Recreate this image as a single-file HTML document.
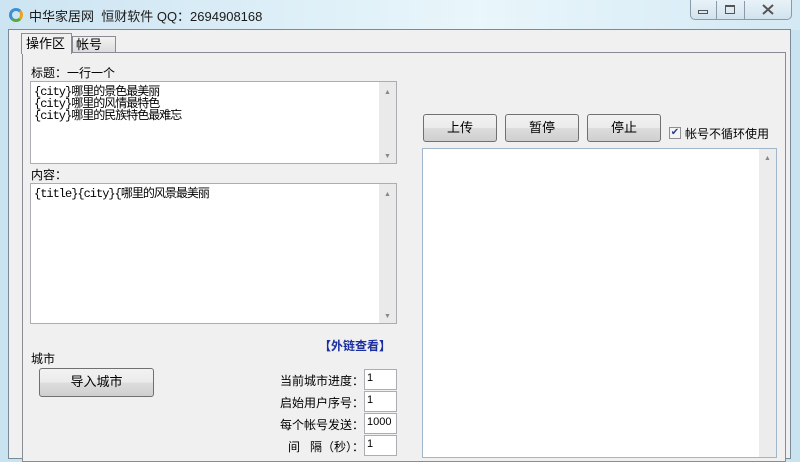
<!DOCTYPE html>
<html><head><meta charset="utf-8"><style>
*{margin:0;padding:0;box-sizing:border-box}
body{width:800px;height:454px;overflow:hidden;position:relative;background:#c9e3f0;font-family:"Liberation Sans","Noto Sans CJK SC","WenQuanYi Zen Hei",sans-serif;font-size:12px;color:#000}
.a{position:absolute}
.title{left:0;top:0;width:800px;height:30px;background:linear-gradient(90deg,#cde4f2 0%,#dff0f8 40%,#e9f6fb 60%,#d4e9f4 100%);}
.client{left:8px;top:29px;width:783px;height:430px;background:#f0f0f0;border:1px solid #7a8a99}
.ta{background:#fff;border:1px solid #abadb3}
.sb{position:absolute;right:0;top:0;width:17px;bottom:0;background:#eaeaea}
.btn{border:1px solid #707070;border-radius:3px;background:linear-gradient(#f2f2f2,#ebebeb 50%,#dddddd 51%,#cfcfcf);text-align:center;font-size:13px}
.mono{font-family:"Liberation Mono","Noto Sans CJK SC",monospace;font-size:12px;line-height:12px;letter-spacing:-1px}
.inp{background:#fff;border:1px solid #abadb3;width:33px;height:21px;font-size:11px;padding:2px 2px;line-height:12px}
.lbl{font-size:12px;text-align:right;width:120px}
</style></head><body>
<div class="a title"></div>
<div class="a" style="left:9px;top:8px;width:14px;height:14px;border-radius:50%;border:3px solid #3d8fd6;border-right-color:#e8a420;border-bottom-color:#5aa83c"></div>
<div class="a" style="left:29px;top:6px;font-size:13px;color:#1a1a1a">中华家居网&nbsp; 恒财软件 QQ：2694908168</div>
<div class="a" style="left:690px;top:0;width:102px;height:20px;border:1px solid #8a9aab;border-top:none;border-radius:0 0 5px 5px;background:linear-gradient(#e8f2f8,#d2e3ee)"></div>
<div class="a" style="left:716px;top:1px;width:1px;height:18px;background:#8a9aab"></div>
<div class="a" style="left:744px;top:1px;width:1px;height:18px;background:#8a9aab"></div>
<div class="a" style="left:698px;top:10px;width:10px;height:4px;border:1px solid #555"></div>
<div class="a" style="left:725px;top:5px;width:10px;height:9px;border:1px solid #555;border-top-width:2px"></div>
<svg class="a" style="left:762px;top:4px" width="12" height="11"><path d="M1 1L11 10M11 1L1 10" stroke="#555" stroke-width="2"/></svg>
<div class="a client"></div>
<div class="a" style="left:22px;top:52px;width:764px;height:410px;border:1px solid #898c95;background:#f0f0f0"></div>
<div class="a" style="left:72px;top:36px;width:44px;height:17px;border:1px solid #898c95;background:linear-gradient(#f3f3f3,#dcdcdc);font-size:13px;padding-left:3px;line-height:16px">帐号</div>
<div class="a" style="left:21px;top:33px;width:51px;height:21px;border:1px solid #898c95;border-bottom:none;background:#f0f0f0;font-size:13px;padding-left:4px;line-height:19px">操作区</div>
<div class="a" style="left:31px;top:64px;font-size:12px">标题：一行一个</div>
<div class="a ta" style="left:30px;top:81px;width:367px;height:83px"><div class="sb"><div class="a" style="left:5px;top:7px;font-size:7px;color:#888">▲</div><div class="a" style="left:5px;bottom:3px;font-size:7px;color:#888">▼</div></div>
<div class="a mono" style="left:3px;top:4px">{city}哪里的景色最美丽<br>{city}哪里的风情最特色<br>{city}哪里的民族特色最难忘</div></div>
<div class="a" style="left:31px;top:166px;font-size:12px">内容：</div>
<div class="a ta" style="left:30px;top:183px;width:367px;height:141px"><div class="sb"><div class="a" style="left:5px;top:7px;font-size:7px;color:#888">▲</div><div class="a" style="left:5px;bottom:3px;font-size:7px;color:#888">▼</div></div>
<div class="a mono" style="left:3px;top:4px">{title}{city}{哪里的风景最美丽</div></div>
<div class="a" style="left:319px;top:337px;font-size:12px;font-weight:bold;color:#1a2ea0">【外链查看】</div>
<div class="a" style="left:31px;top:350px;font-size:12px">城市</div>
<div class="a btn" style="left:39px;top:368px;width:115px;height:29px;line-height:26px">导入城市</div>
<div class="a lbl" style="left:244px;top:372px">当前城市进度：</div>
<div class="a lbl" style="left:244px;top:394px">启始用户序号：</div>
<div class="a lbl" style="left:244px;top:416px">每个帐号发送：</div>
<div class="a lbl" style="left:244px;top:438px">间&nbsp;&nbsp; 隔（秒）：</div>
<div class="a inp" style="left:364px;top:369px">1</div>
<div class="a inp" style="left:364px;top:391px">1</div>
<div class="a inp" style="left:364px;top:413px">1000</div>
<div class="a inp" style="left:364px;top:435px">1</div>
<div class="a btn" style="left:423px;top:114px;width:74px;height:28px;line-height:26px">上传</div>
<div class="a btn" style="left:505px;top:114px;width:74px;height:28px;line-height:26px">暂停</div>
<div class="a btn" style="left:587px;top:114px;width:74px;height:28px;line-height:26px">停止</div>
<div class="a" style="left:669px;top:127px;width:12px;height:12px;border:1px solid #8f8f8f;background:#f4f4f4;font-size:10px;line-height:10px;color:#2a3f8f;text-align:center">✔</div>
<div class="a" style="left:685px;top:125px;font-size:12px">帐号不循环使用</div>
<div class="a ta" style="left:422px;top:148px;width:355px;height:310px;border-color:#9fb6cb"><div class="sb" style="background:#ececec"><div class="a" style="left:5px;top:6px;font-size:7px;color:#888">▲</div></div></div>
</body></html>
